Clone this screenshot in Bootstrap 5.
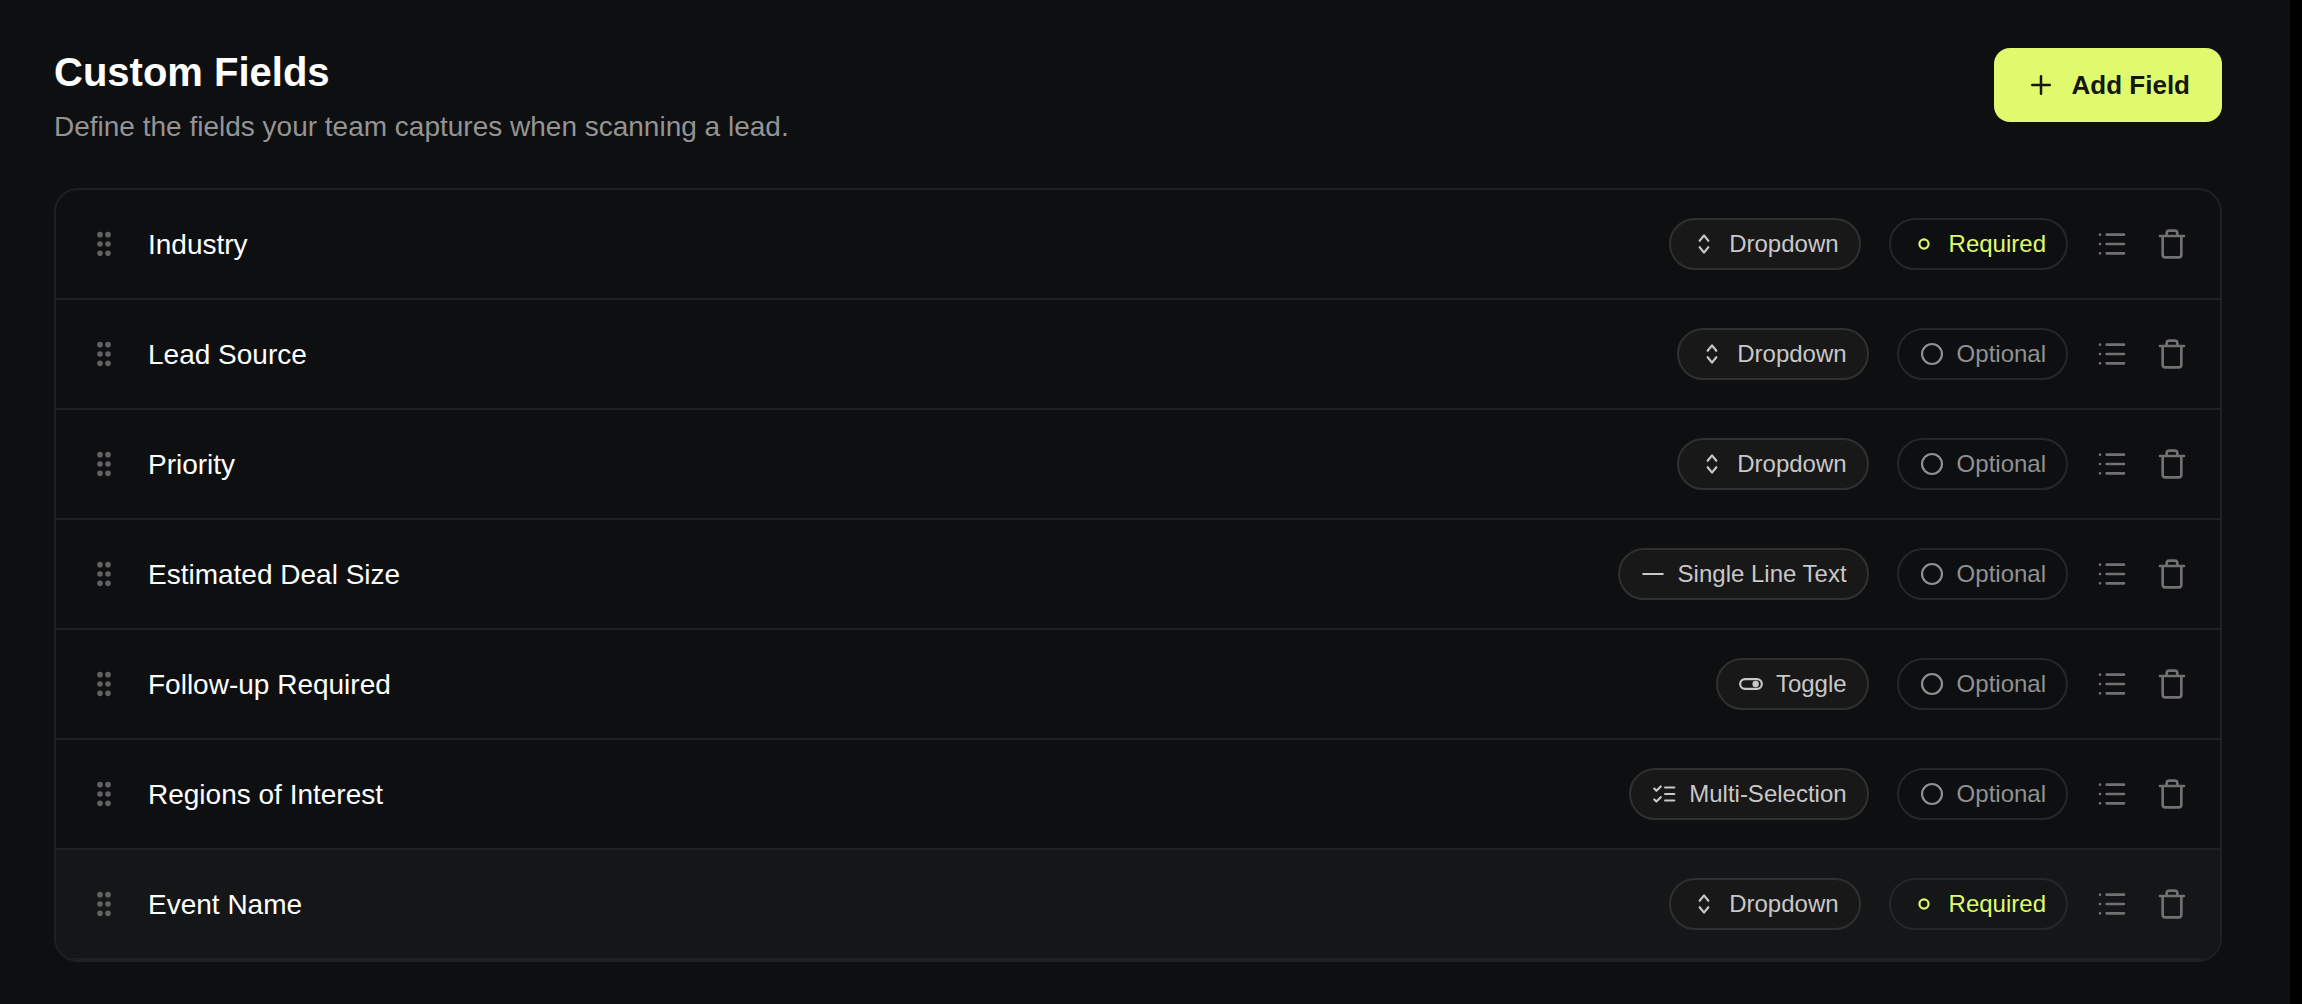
<!DOCTYPE html>
<html lang="en" data-bs-theme="dark">
<head>
<meta charset="utf-8">
<meta name="viewport" content="width=device-width, initial-scale=1">
<title>Custom Fields</title>
<link href="https://cdn.jsdelivr.net/npm/bootstrap@5.3.0/dist/css/bootstrap.min.css" rel="stylesheet">
<style>
  body { background: #0e0f11; font-family: "Liberation Sans", Arial, sans-serif; color: #fff; border-right: 12px solid #000; }
  .page { padding: 48px 68px 42px 54px; }
  .page-title { font-size: 40px; line-height: 48px; font-weight: 700; }
  .page-sub { font-size: 28px; line-height: 42px; color: #949494; margin-top: 10px; }
  .btn-add { --bs-btn-bg: #dffb6d; --bs-btn-color: #14170a; --bs-btn-hover-bg: #d2ee60; --bs-btn-hover-color: #14170a; --bs-btn-border-width: 0; font-size: 26px; font-weight: 700; line-height: 34px; padding: 20px 32px; border-radius: 16px; gap: 16px; }
  .field-list { border: 2px solid #1f2022; border-radius: 24px; overflow: hidden; margin-top: 40px; }
  .field-row { gap: 28px; padding: 28px 32px; border-bottom: 2px solid #1f2022; }
  .field-row.is-hover { background: #151617; }
  .field-name { font-size: 28px; line-height: 40px; padding-top: 2px; }
  .bare { background: none; border: 0; padding: 0; color: #737071; display: flex; }
  .grip { color: #626263; }
  .chip { display: flex; align-items: center; gap: 12px; font-size: 24px; line-height: 32px; padding: 8px 20px; border: 2px solid #262729; border-radius: 26px; background: none; color: #919191; }
  .chip-type { background: #181818; border-color: #303030; color: #c8c8c8; }
  .chip-req { color: #dffb6d; }
  svg { fill: none; stroke: currentColor; stroke-width: 2; stroke-linecap: round; stroke-linejoin: round; flex: none; }
  .i26 { width: 26px; height: 26px; }
  .i30 { width: 30px; height: 30px; }
  .i32 { width: 32px; height: 32px; }
</style>
</head>
<body>
<svg class="d-none">
  <symbol id="grip" viewBox="0 0 24 24"><g fill="currentColor" stroke="none"><circle cx="9" cy="5" r="2.1"/><circle cx="15" cy="5" r="2.1"/><circle cx="9" cy="12" r="2.1"/><circle cx="15" cy="12" r="2.1"/><circle cx="9" cy="19" r="2.1"/><circle cx="15" cy="19" r="2.1"/></g></symbol>
  <symbol id="updown" viewBox="0 0 24 24"><path d="m8 15 4 5 4-5M8 9l4-5 4 5"/></symbol>
  <symbol id="line" viewBox="0 0 24 24"><path d="M3 12h18"/></symbol>
  <symbol id="toggle" viewBox="0 0 24 24"><rect x="2" y="7.5" width="20" height="9" rx="4.5"/><circle cx="16.3" cy="12" r="3" fill="currentColor" stroke="none"/></symbol>
  <symbol id="checks" viewBox="0 0 24 24"><path d="M13 6h8.500M13 12h8.500M13 18h8.500M3 17l2 2 4-4M3 7l2 2 4-4"/></symbol>
  <symbol id="ring" viewBox="0 0 24 24"><circle cx="12" cy="12" r="4.200"/></symbol>
  <symbol id="circle" viewBox="0 0 24 24"><circle cx="12" cy="12" r="9.200"/></symbol>
  <symbol id="list" viewBox="0 0 24 24"><path d="M3 5h.01M3 12h.01M3 19h.01M8 5h13M8 12h13M8 19h13"/></symbol>
  <symbol id="trash" viewBox="0 0 24 24"><path d="M19 6v14a2 2 0 0 1-2 2H7a2 2 0 0 1-2-2V6M3 6h18M8 6V4a2 2 0 0 1 2-2h4a2 2 0 0 1 2 2v2"/></symbol>
</svg>
<main class="page">
  <header class="d-flex justify-content-between align-items-start">
    <div>
      <h1 class="page-title mb-0">Custom Fields</h1>
      <p class="page-sub mb-0">Define the fields your team captures when scanning a lead.</p>
    </div>
    <button type="button" class="btn btn-add d-flex align-items-center"><svg class="i30" viewBox="0 0 24 24" aria-hidden="true"><path d="M5 12h14M12 5v14"/></svg>Add Field</button>
  </header>
  <ul class="field-list list-unstyled mb-0" id="fields"></ul>
</main>
<script>
  const fields = [
    ["Industry", "Dropdown", "updown", true],
    ["Lead Source", "Dropdown", "updown", false],
    ["Priority", "Dropdown", "updown", false],
    ["Estimated Deal Size", "Single Line Text", "line", false],
    ["Follow-up Required", "Toggle", "toggle", false],
    ["Regions of Interest", "Multi-Selection", "checks", false],
    ["Event Name", "Dropdown", "updown", true]
  ];
  const icon = (id, size) => `<svg class="${size}" aria-hidden="true"><use href="#${id}"/></svg>`;
  document.getElementById("fields").innerHTML = fields.map(([name, type, glyph, required], i) => `
    <li class="field-row d-flex align-items-center${i === fields.length - 1 ? " is-hover" : ""}">
      <button type="button" class="bare grip" aria-label="Reorder ${name}">${icon("grip", "i32")}</button>
      <span class="field-name me-auto">${name}</span>
      <span class="chip chip-type">${icon(glyph, "i26")}${type}</span>
      <button type="button" class="chip${required ? " chip-req" : ""}">${icon(required ? "ring" : "circle", "i26")}${required ? "Required" : "Optional"}</button>
      <button type="button" class="bare" aria-label="Edit options of ${name}">${icon("list", "i32")}</button>
      <button type="button" class="bare" aria-label="Delete ${name}">${icon("trash", "i32")}</button>
    </li>`).join("");
</script>
<script src="https://cdn.jsdelivr.net/npm/bootstrap@5.3.0/dist/js/bootstrap.bundle.min.js"></script>
</body>
</html>
